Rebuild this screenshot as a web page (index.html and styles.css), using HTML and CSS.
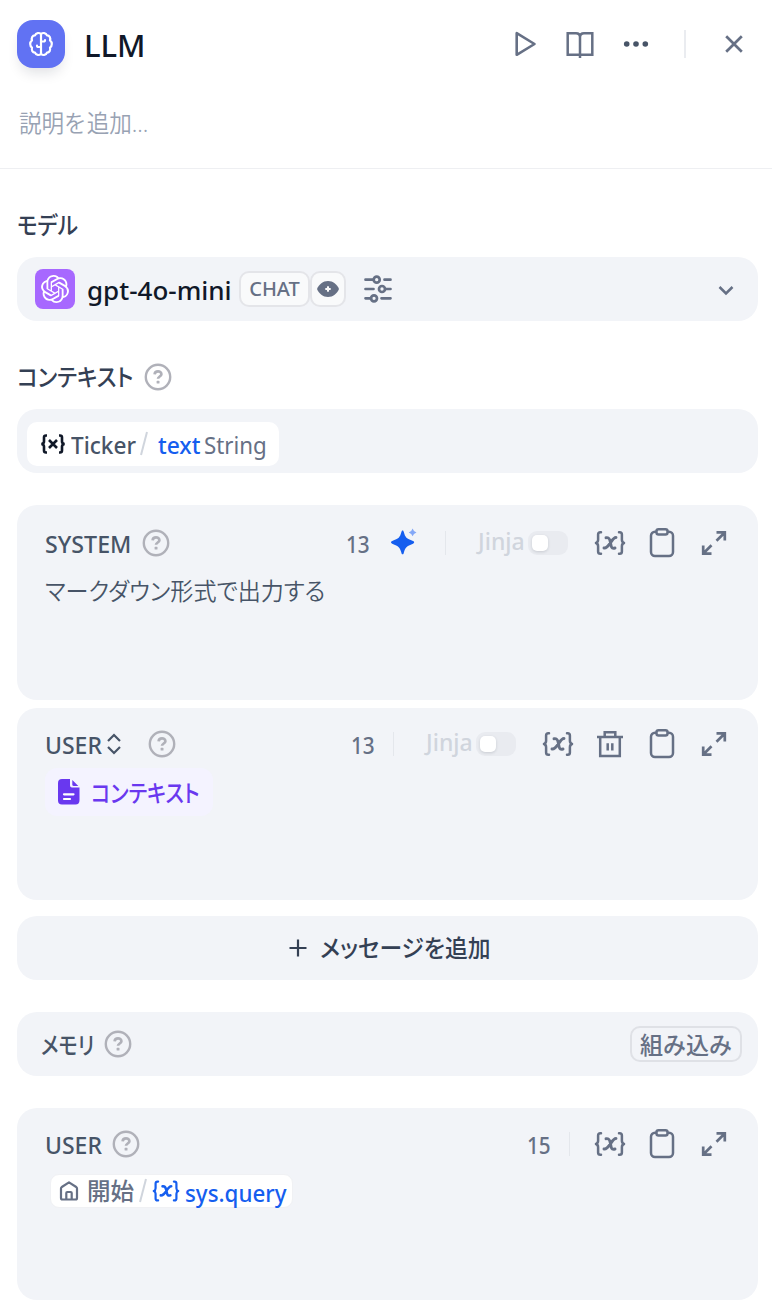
FILE: index.html
```html
<!DOCTYPE html>
<html lang="ja">
<head>
<meta charset="utf-8">
<title>LLM</title>
<link rel="stylesheet" href="styles.css">
</head>
<body>
<svg class="defs" width="0" height="0" aria-hidden="true">
  <symbol id="help" viewBox="0 0 28 28"><g fill="none" stroke="#b0b1b9" stroke-width="2.4"><circle cx="14" cy="14" r="12.2"/><path d="M10.600 11.400c.2-2 1.600-3 3.400-3s3.400 1.100 3.400 2.800c0 2.300-3.400 2.300-3.400 4.600" stroke-width="2.700"/></g><rect x="12.600" y="17.800" width="2.900" height="2.800" rx=".6" fill="#b0b1b9"/></symbol>
  <symbol id="var" viewBox="0 0 32 32"><g fill="none" stroke="currentColor" stroke-width="2.500" stroke-linecap="round" stroke-linejoin="round"><path d="M7 5.200H6.300c-1.500 0-2.200.8-2.200 2.300v5.300c0 1.600-.7 2.700-2.100 3.200 1.400.5 2.100 1.600 2.100 3.200v5.300c0 1.500.7 2.300 2.200 2.300H7M25 5.200h.7c1.500 0 2.200.8 2.200 2.300v5.300c0 1.600.7 2.700 2.100 3.200-1.400.5-2.100 1.600-2.100 3.200v5.300c0 1.500-.7 2.300-2.200 2.300H25"/><path d="M12 10.700c2.600-.4 3.500.7 4.200 3.700l.9 4.300c.5 2.300 1.600 3 3.900 2.300M22 10.500c-4.300-.3-6.700 11.200-12 10.500" stroke-width="2.900"/></g></symbol>
  <symbol id="clip" viewBox="0 0 32 32"><g fill="none" stroke="currentColor" stroke-width="2.500"><path d="M10.500 4.800H9a4 4 0 0 0-4 4V25a4 4 0 0 0 4 4h14a4 4 0 0 0 4-4V8.800a4 4 0 0 0-4-4h-1.500"/><rect x="10.500" y="2.200" width="11" height="5.400" rx="2"/></g></symbol>
  <symbol id="expand" viewBox="0 0 32 32"><path d="M18.500 5.400H26.800V13.500M26.500 5.700l-8 8M5.200 18.500V26.600H13.500M5.500 26.300l8-8" fill="none" stroke="currentColor" stroke-width="2.700"/></symbol>
  <symbol id="trash" viewBox="0 0 32 32"><path d="M3 9h26M6.200 9v19h19.600V9M10.700 9V4.200h10.600V9M13.700 15.200v7.300M18.300 15.200v7.300" fill="none" stroke="currentColor" stroke-width="2.500"/></symbol>
</svg>

<header class="head">
  <div class="head-row">
    <span class="node-icon"><svg width="26" height="26" viewBox="0 0 26 26" fill="none" stroke="#fff" stroke-width="2.200" stroke-linecap="round" stroke-linejoin="round"><path d="M13 3C11.300 1.500 8 1.500 7 4.300 4.300 4.300 3.200 7 4 9.300c-2.400 1.800-2.400 5.800 0 7.400-.8 2.500.6 4.800 3 5C8 24.500 11.300 24.500 13 23c1.700 1.500 5 1.500 6-1.300 2.400-.2 3.800-2.500 3-5 2.400-1.600 2.400-5.600 0-7.400.8-2.300-.3-5-3-5C18 1.500 14.700 1.500 13 3ZM13 3v20M13 10.500h2.500q1.500 0 1.500-1.300M13 16h-2.500Q9 16 9 14.700"/></svg></span>
    <h1 class="title">LLM</h1>
    <div class="head-tools">
      <svg width="32" height="32" viewBox="0 0 32 32" fill="none" stroke="currentColor" stroke-width="2.600" stroke-linejoin="round"><path d="M8.700 5.200v21.600L26.500 16z"/></svg>
      <svg width="32" height="32" viewBox="0 0 32 32" fill="none" stroke="currentColor" stroke-width="2.500"><path d="M16 30V8.500M16 26.800H3.700V5.200H12q4 0 4 4 0-4 4-4h8.300v21.600H16"/></svg>
      <svg width="32" height="32" viewBox="0 0 32 32" fill="#475467"><circle cx="6.700" cy="16" r="2.800"/><circle cx="16" cy="16" r="2.800"/><circle cx="25.300" cy="16" r="2.800"/></svg>
      <i class="head-sep"></i>
      <svg width="32" height="32" viewBox="0 0 32 32" fill="none" stroke="currentColor" stroke-width="2.700"><path d="M8.200 8.200l15.600 15.600M23.800 8.200L8.200 23.800"/></svg>
    </div>
  </div>
  <p class="desc">説明を追加...</p>
</header>

<main class="body">
  <div class="label"><span class="t-model">モデル</span></div>
  <section class="card model">
    <span class="logo"><svg width="28" height="28" viewBox="0 0 24 24" fill="#fff"><path d="M22.2819 9.8211a5.9847 5.9847 0 0 0-.5157-4.9108 6.0462 6.0462 0 0 0-6.5098-2.9A6.0651 6.0651 0 0 0 4.9807 4.1818a5.9847 5.9847 0 0 0-3.9977 2.9 6.0462 6.0462 0 0 0 .7427 7.0966 5.98 5.98 0 0 0 .511 4.9107 6.051 6.051 0 0 0 6.5146 2.9001A5.9847 5.9847 0 0 0 13.2599 24a6.0557 6.0557 0 0 0 5.7718-4.2058 5.9894 5.9894 0 0 0 3.9977-2.9001 6.0557 6.0557 0 0 0-.7475-7.073zm-9.022 12.6081a4.4755 4.4755 0 0 1-2.8764-1.0408l.1419-.0804 4.7783-2.7582a.7948.7948 0 0 0 .3927-.6813v-6.7369l2.02 1.1686a.071.071 0 0 1 .038.0615v5.5826a4.504 4.504 0 0 1-4.4945 4.4944zm-9.6607-4.1254a4.4708 4.4708 0 0 1-.5346-3.0137l.142.0852 4.783 2.7582a.7712.7712 0 0 0 .7806 0l5.8428-3.3685v2.3324a.0804.0804 0 0 1-.0332.0615L9.74 19.9502a4.4992 4.4992 0 0 1-6.1408-1.6464zM2.3408 7.8956a4.485 4.485 0 0 1 2.3655-1.9728V11.6a.7664.7664 0 0 0 .3879.6765l5.8144 3.3543-2.0201 1.1685a.0757.0757 0 0 1-.071 0l-4.8303-2.7865A4.504 4.504 0 0 1 2.3408 7.872zm16.5963 3.8558L13.1038 8.364 15.1192 7.2a.0757.0757 0 0 1 .071 0l4.8303 2.7913a4.4944 4.4944 0 0 1-.6765 8.1042v-5.6772a.79.79 0 0 0-.407-.667zm2.0107-3.0231l-.142-.0852-4.7735-2.7818a.7759.7759 0 0 0-.7854 0L9.409 9.2297V6.8974a.0662.0662 0 0 1 .0284-.0615l4.8303-2.7866a4.4992 4.4992 0 0 1 6.6802 4.66zM8.3065 12.863l-2.02-1.1638a.0804.0804 0 0 1-.038-.0567V6.0742a4.4992 4.4992 0 0 1 7.3757-3.4537l-.142.0805L8.704 5.459a.7948.7948 0 0 0-.3927.6813zm1.0976-2.3654l2.602-1.4998 2.6069 1.4998v2.9994l-2.5974 1.4997-2.6067-1.4997Z"/></svg></span>
    <span class="model-name">gpt-4o-mini</span>
    <span class="badge chat"><span>CHAT</span></span>
    <span class="badge eye"><svg width="24" height="24" viewBox="0 0 24 24"><path d="M12 4C17 4 21 7.500 23 12c-2 4.500-6 8-11 8S3 16.500 1 12C3 7.500 7 4 12 4z" fill="#667085"/><path d="M12 9.200l.8 2 2 .8-2 .8-.8 2-.8-2-2-.8 2-.8z" fill="#fff" stroke="#fff"/></svg></span>
    <svg class="sliders" width="32" height="32" viewBox="0 0 32 32" fill="none" stroke="currentColor" stroke-width="2.700" stroke-linecap="round"><path d="M3.500 6.700h8M22.500 6.700h6M3.500 16h8M24.500 16h4M3.500 25.300h4M19.500 25.300h9M23.500 16h2M7 25.300h2"/><circle cx="14.700" cy="6.700" r="3"/><circle cx="20" cy="16" r="3"/><circle cx="12" cy="25.300" r="3"/></svg>
    <svg class="chev" width="28" height="28" viewBox="0 0 28 28" fill="none" stroke="currentColor" stroke-width="2.500"><path d="M7.500 12l6.500 6.500 6.500-6.500"/></svg>
  </section>

  <div class="label ctx-label"><span class="t-ctx">コンテキスト</span><svg class="help"><use href="#help"/></svg></div>
  <section class="card context">
    <div class="pill">
      <svg width="26" height="26" viewBox="0 0 26 26" fill="none" stroke="#101828" stroke-width="2.600"><path d="M7 4.500H6q-2 0-2 2v4q0 2-2.500 2.500Q4 13.500 4 15.500v4q0 2 2 2h1M19 4.500h1q2 0 2 2v4q0 2 2.500 2.500-2.500.5-2.500 2.500v4q0 2-2 2h-1M9 9l8 8M17 9l-8 8"/></svg>
      <span class="ticker">Ticker</span>
      <svg class="slash" width="10" height="26" viewBox="0 0 10 26"><path d="M8 1L2 24" stroke="#d0d5dd" stroke-width="2"/></svg>
      <span class="text">text</span><span class="string">String</span>
    </div>
  </section>

  <section class="card prompt system">
    <div class="bar">
      <span class="role sys">SYSTEM</span><svg class="help"><use href="#help"/></svg>
      <div class="tools">
        <span class="count">13</span>
        <svg class="spark" width="28" height="30" viewBox="0 0 28 30"><path d="M12.600 4.500c.8 0 .9.500 1.200 1.600 1.500 5.500 2.600 6.500 9.200 9 1.600.6 1.600 2 0 2.600-6.600 2.500-7.700 3.500-9.200 9-.3 1.100-.4 1.600-1.200 1.600s-.9-.5-1.200-1.600c-1.500-5.500-2.600-6.500-9.200-9-1.600-.6-1.600-2 0-2.600 6.600-2.500 7.700-3.500 9.200-9 .3-1.100.4-1.600 1.200-1.600z" fill="#155eef"/><path d="M22.600 2.500q.8 3 3.900 3.900-3.100.9-3.900 3.900-.8-3-3.900-3.900 3.100-.9 3.900-3.900z" fill="#84a8f7"/></svg>
        <i class="sep sep-sys"></i>
        <span class="jinja">Jinja</span><i class="toggle"></i>
        <svg class="ic"><use href="#var"/></svg><svg class="ic"><use href="#clip"/></svg><svg class="ic"><use href="#expand"/></svg>
      </div>
    </div>
    <p class="content">マークダウン形式で出力する</p>
  </section>

  <section class="card prompt user">
    <div class="bar">
      <span class="role usr">USER</span>
      <svg class="updown" width="16" height="24" viewBox="0 0 16 24" fill="none" stroke="#475467" stroke-width="2.200"><path d="M2 9l6-6 6 6M2 15l6 6 6-6"/></svg>
      <svg class="help"><use href="#help"/></svg>
      <div class="tools">
        <span class="count">13</span>
        <i class="sep sep-user"></i>
        <span class="jinja">Jinja</span><i class="toggle"></i>
        <svg class="ic"><use href="#var"/></svg><svg class="ic"><use href="#trash"/></svg><svg class="ic"><use href="#clip"/></svg><svg class="ic"><use href="#expand"/></svg>
      </div>
    </div>
    <div class="ctx-chip">
      <svg width="24" height="28" viewBox="0 0 24 28"><path d="M5 1h8v6.500q0 2 2 2h7.500V22q0 4.500-4 4.500H5q-4 0-4-4V5q0-4 4-4z" fill="#6938ef"/><path d="M15.300 2l6 6h-4.500q-1.500 0-1.500-1.500z" fill="#6938ef"/><path d="M7 16.300h9.500M7 21h6" stroke="#fff" stroke-width="2.200" stroke-linecap="round"/></svg>
      <span class="chip-text">コンテキスト</span>
    </div>
  </section>

  <button class="card add"><svg width="18" height="18" viewBox="0 0 18 18" stroke="#344054" stroke-width="2.200"><path d="M9 .5v17M.5 9h17"/></svg><span class="add-text">メッセージを追加</span></button>

  <section class="card memory">
    <span class="mem-text">メモリ</span><svg class="help"><use href="#help"/></svg>
    <span class="builtin"><span>組み込み</span></span>
  </section>

  <section class="card prompt query">
    <div class="bar">
      <span class="role usr">USER</span><svg class="help"><use href="#help"/></svg>
      <div class="tools">
        <span class="count">15</span>
        <i class="sep sep-query"></i>
        <svg class="ic"><use href="#var"/></svg><svg class="ic"><use href="#clip"/></svg><svg class="ic"><use href="#expand"/></svg>
      </div>
    </div>
    <div class="sys-chip">
      <svg width="20" height="20" viewBox="0 0 20 20" fill="none" stroke="#667085" stroke-width="2.200" stroke-linejoin="round"><path d="M2 7.500Q2 6.700 2.800 6L10 1.300 17.200 6q.8.700.8 1.500V17q0 1.500-1.500 1.500h-13Q2 18.500 2 17zM7.300 18.500V12q0-1 1-1h3.400q1 0 1 1v6.500"/></svg>
      <span class="start">開始</span>
      <svg class="slash" width="10" height="26" viewBox="0 0 10 26"><path d="M8 1L2 24" stroke="#d0d5dd" stroke-width="2"/></svg>
      <svg class="bluevar" width="28" height="28"><use href="#var"/></svg>
      <span class="query-text">sys.query</span>
    </div>
  </section>
</main>
</body>
</html>
```
FILE: styles.css
```css
* { box-sizing: border-box; }
body {
  margin: 0;
  width: 772px;
  height: 1310px;
  overflow: hidden;
  background: #fff;
  color: #667085;
  font-family: "Noto Sans", "Noto Sans CJK JP", sans-serif;
  font-size: 24px;
  line-height: 32px;
}
svg { display: block; flex: none; }
.defs { position: absolute; }
span { display: block; white-space: nowrap; flex: none; transform-origin: 0 50%; }
i { display: block; flex: none; }

.head { height: 169px; padding: 20px 22px 0 17px; border-bottom: 1px solid #eeeff2; }
.head-row { display: flex; align-items: center; height: 48px; }
.node-icon { width: 48px; height: 48px; border-radius: 16px; background: #6172f3; display: flex; align-items: center; justify-content: center; box-shadow: 0 8px 14px -4px rgba(16,24,40,.14); }
.title { margin: 1px 0 0 19px; color: #101828; font-size: 31px; font-weight: 500; line-height: 40px; }
.head-tools { margin-left: auto; display: flex; align-items: center; gap: 24px; }
.head-sep { width: 2px; height: 28px; margin: 0 8px; background: #eaecf0; }
.desc { margin: 39px 0 0 2px; color: #98a2b3; font-weight: 350; transform: scaleX(.94); transform-origin: 0 50%; }

.body { padding: 0 14px 0 17px; }
.label { display: flex; align-items: center; height: 88px; padding-top: 23px; color: #344054; font-weight: 500; font-feature-settings: "palt"; }
.t-model { transform: scaleX(.9); }
.t-ctx { width: 117px; transform: scaleX(.91); }
.ctx-label { gap: 10px; }
.help { width: 28px; height: 28px; }
.card { background: #f2f4f8; border-radius: 20px; }

.model { display: flex; align-items: center; height: 64px; padding: 0 18px; }
.logo { width: 40px; height: 40px; border-radius: 8px; background: #a768ff; display: flex; align-items: center; justify-content: center; }
.model-name { width: 152px; padding-left: 12px; color: #101828; font-size: 26px; font-weight: 500; margin-top: 2px; }
.badge { display: flex; align-items: center; justify-content: center; height: 36px; border: 2px solid #e4e5e9; border-radius: 10px; background: #f9fafb; }
.chat { width: 71px; margin-left: 12px; font-size: 20px; font-weight: 500; }
.eye { width: 36px; }
.sliders { margin-left: 16px; }
.chev { margin-left: auto; }

.context { height: 64px; padding: 13px 10px; }
.pill { display: flex; align-items: center; width: 252px; height: 44px; padding-left: 13px; border-radius: 10px; background: #fff; }
.ticker { width: 68px; margin: 1px 0 0 5px; color: #475467; font-weight: 500; transform: scaleX(.94); }
.text { width: 44px; margin: 1px 0 0 9px; color: #155eef; font-weight: 500; transform: scaleX(.95); }
.string { margin: 1px 0 0 2px; transform: scaleX(.93); }

.prompt { padding: 22px 28px 0; }
.bar { display: flex; align-items: center; height: 32px; }
.role { color: #475467; font-size: 23px; font-weight: 500; margin-top: 2px; }
.sys { width: 97px; transform: scaleX(1.01); }
.usr { width: 60px; }
.tools { display: flex; align-items: center; margin-left: auto; gap: 20px; }
.count { width: 24px; margin-top: 2px; font-size: 23px; font-weight: 500; transform: scaleX(.9); }
.ic { width: 32px; height: 32px; }
.sep { width: 1px; height: 24px; background: #e4e7ec; }
.jinja { width: 46px; color: #d0d5dd; font-size: 23px; font-weight: 500; margin: -5px -16px 0 12px; }
.toggle { width: 40px; height: 24px; margin-right: 6px; padding: 4px; border-radius: 9px; background: #e9ebf0; }
.toggle::before { content: ""; display: block; width: 16px; height: 16px; border-radius: 5px; background: #fff; box-shadow: 0 1px 3px rgba(16,24,40,.15); }
.spark { margin: -4px 7px 0 0; }
.sep-user, .sep-query { margin-left: -2px; }
.sep-query { margin-right: 4px; }

.system { height: 195px; margin-top: 32px; }
.content { margin: 16px 0 0; color: #475467; font-weight: 350; font-feature-settings: "palt"; transform: scaleX(.96); transform-origin: 0 50%; }
.user { height: 192px; margin-top: 8px; padding-top: 20px; }
.updown { margin: 0 26px 0 1px; }
.ctx-chip { display: flex; align-items: center; width: 168px; height: 48px; margin-top: 8px; padding-left: 12px; gap: 10px; border-radius: 12px; background: #f4f3ff; color: #6938ef; font-weight: 500; font-feature-settings: "palt"; }
.chip-text { width: 109px; margin-top: 2px; transform: scaleX(.85); }

.add { display: flex; align-items: center; justify-content: center; width: 741px; height: 64px; margin-top: 16px; padding: 0 0 0 4px; border: 0; gap: 13px; color: #344054; font: inherit; font-weight: 500; font-feature-settings: "palt"; }
.add-text { width: 170px; transform: scaleX(.95); text-align: left; }
.memory { display: flex; align-items: center; height: 64px; margin-top: 32px; padding: 0 16px 0 24px; }
.mem-text { width: 63px; margin-top: 2px; color: #475467; font-weight: 500; font-feature-settings: "palt"; transform: scaleX(.84); }
.builtin { display: flex; align-items: center; justify-content: center; width: 112px; height: 36px; margin-left: auto; border: 2px solid #dfe1e6; border-radius: 10px; font-weight: 500; }
.builtin span { margin-top: 2px; transform: scaleX(.96); transform-origin: 50% 50%; }
.query { height: 192px; margin-top: 32px; padding-top: 20px; }
.query .help { margin-left: 7px; }
.sys-chip { display: flex; align-items: center; width: 243px; height: 34px; margin: 14px 0 0 5px; padding-left: 8px; border: 1px solid #f0f1f4; border-radius: 9px; background: #fff; font-weight: 500; }
.start { width: 50px; margin: 0 1px 0 8px; transform: scaleX(.98); }
.bluevar { margin-left: 4px; color: #155eef; }
.query-text { margin: 3px 0 0 5px; color: #155eef; transform: scaleX(.93); }
```
